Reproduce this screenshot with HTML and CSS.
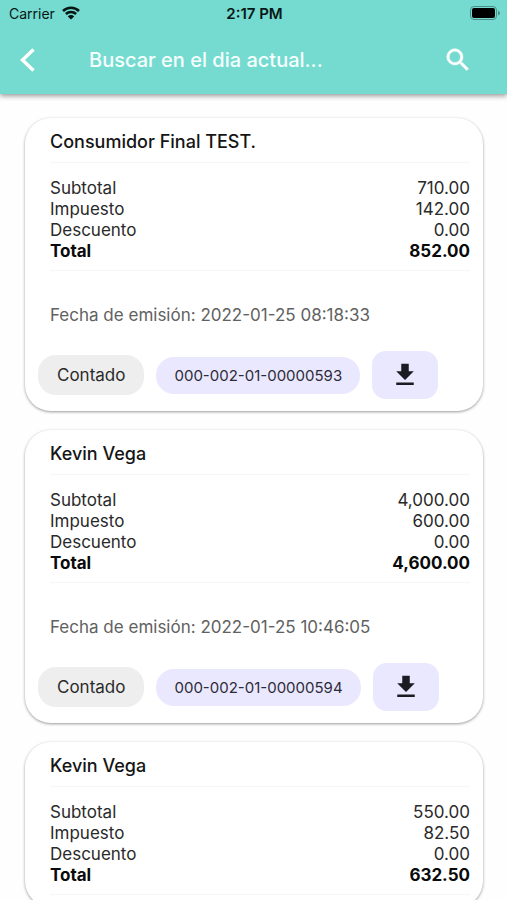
FILE: index.html
```html
<!DOCTYPE html>
<html lang="es">
<head>
<meta charset="utf-8">
<meta name="viewport" content="width=device-width, initial-scale=1">
<title>Facturas</title>
<link rel="stylesheet" href="styles.css">
</head>
<body>
<div class="app">
  <header class="header">
    <div class="status">
      <div class="carrier">
        <span>Carrier</span>
        <svg width="18" height="14" viewBox="0 0 18 14" aria-hidden="true">
          <path d="M1 5a11.300 11.300 0 0 1 16 0M3.900 8a7.200 7.200 0 0 1 10.200 0" fill="none" stroke="#071715" stroke-width="2.500"/>
          <path d="M9 13.500L5.800 10.400a4.500 4.500 0 0 1 6.400 0z" fill="#071715"/>
        </svg>
      </div>
      <div class="time">2:17 PM</div>
      <svg class="battery" width="30" height="14" viewBox="0 0 30 14" aria-hidden="true">
        <rect x=".5" y=".5" width="26" height="13" rx="3.500" fill="none" stroke="#4b8f87"/>
        <rect x="2" y="2" width="23" height="10" rx="2" fill="#000"/>
        <path d="M28 4.500q2 1 2 2.500t-2 2.500z" fill="#4b8f87"/>
      </svg>
    </div>
    <div class="bar">
      <button class="icon-button" type="button" aria-label="Volver">
        <svg width="16" height="24" viewBox="0 0 16 24" aria-hidden="true"><path d="M13.500 1.500L2.500 12l11 10.500" fill="none" stroke="#fff" stroke-width="3.400"/></svg>
      </button>
      <input class="search" type="text" placeholder="Buscar en el dia actual..." aria-label="Buscar">
      <button class="icon-button" type="button" aria-label="Buscar">
        <svg width="30" height="30" viewBox="0 0 24 24" aria-hidden="true"><path fill="#fff" stroke="#fff" stroke-width=".4" d="M15.500 14h-.79l-.28-.27A6.471 6.471 0 0 0 16 9.500 6.500 6.500 0 1 0 9.500 16c1.610 0 3.090-.59 4.230-1.570l.27.28v.79l5 4.990L20.490 19l-4.990-5zm-6 0C7.010 14 5 11.990 5 9.500S7.010 5 9.500 5 14 7.010 14 9.500 11.990 14 9.500 14z"/></svg>
      </button>
    </div>
  </header>
  <main class="list">
    <article class="card">
      <h2 class="name">Consumidor Final TEST.</h2>
      <table class="amounts">
        <tr><th scope="row">Subtotal</th><td>710.00</td></tr>
        <tr><th scope="row">Impuesto</th><td>142.00</td></tr>
        <tr><th scope="row">Descuento</th><td>0.00</td></tr>
        <tr class="total"><th scope="row">Total</th><td>852.00</td></tr>
      </table>
      <p class="date">Fecha de emisión: 2022-01-25 08:18:33</p>
      <div class="actions">
        <span class="chip">Contado</span>
        <span class="chip number">000-002-01-00000593</span>
        <button class="download" type="button" aria-label="Descargar"><svg width="30" height="30" viewBox="0 0 24 24" aria-hidden="true"><path fill="#1b1b22" d="M19 9h-4V3H9v6H5l7 7 7-7zM5 18v2h14v-2H5z"/></svg></button>
      </div>
    </article>
    <article class="card">
      <h2 class="name">Kevin Vega</h2>
      <table class="amounts">
        <tr><th scope="row">Subtotal</th><td>4,000.00</td></tr>
        <tr><th scope="row">Impuesto</th><td>600.00</td></tr>
        <tr><th scope="row">Descuento</th><td>0.00</td></tr>
        <tr class="total"><th scope="row">Total</th><td>4,600.00</td></tr>
      </table>
      <p class="date">Fecha de emisión: 2022-01-25 10:46:05</p>
      <div class="actions">
        <span class="chip">Contado</span>
        <span class="chip number">000-002-01-00000594</span>
        <button class="download" type="button" aria-label="Descargar"><svg width="30" height="30" viewBox="0 0 24 24" aria-hidden="true"><path fill="#1b1b22" d="M19 9h-4V3H9v6H5l7 7 7-7zM5 18v2h14v-2H5z"/></svg></button>
      </div>
    </article>
    <article class="card">
      <h2 class="name">Kevin Vega</h2>
      <table class="amounts">
        <tr><th scope="row">Subtotal</th><td>550.00</td></tr>
        <tr><th scope="row">Impuesto</th><td>82.50</td></tr>
        <tr><th scope="row">Descuento</th><td>0.00</td></tr>
        <tr class="total"><th scope="row">Total</th><td>632.50</td></tr>
      </table>
    </article>
  </main>
</div>
</body>
</html>
```
FILE: styles.css
```css
* { box-sizing: border-box; }

body {
  margin: 0;
  background: #fefefe;
  color: #2a2a2a;
  font-family: Inter, "Liberation Sans", sans-serif;
  font-size: 17px;
}

button {
  border: 0;
  padding: 0;
  display: grid;
  place-items: center;
  cursor: pointer;
}

svg { display: block; }

.app {
  height: 100vh;
  display: flex;
  flex-direction: column;
  overflow: hidden;
}

.header {
  background: #75dacf;
  box-shadow: 0 2px 5px rgba(0, 0, 0, .4);
  z-index: 1;
}

.status {
  display: grid;
  grid-template-columns: 1fr auto 1fr;
  align-items: center;
  height: 26px;
  padding: 0 7px 0 9px;
  font-size: 14px;
  color: #071715;
}

.carrier {
  display: flex;
  align-items: center;
  gap: 7px;
}

.time {
  font-size: 15px;
  font-weight: 600;
}

.battery { justify-self: end; }

.bar {
  display: flex;
  align-items: center;
  height: 68px;
  padding: 0 25px 0 4px;
}

.icon-button {
  width: 48px;
  height: 48px;
  background: none;
}

.search {
  flex: 1;
  min-width: 0;
  margin-left: 37px;
  padding: 0;
  border: 0;
  outline: 0;
  background: none;
  color: #fff;
  font: 500 20px/24px Inter, "Liberation Sans", sans-serif;
}

.search::placeholder {
  color: #f4fffe;
  opacity: 1;
}

.list {
  flex: 1;
  min-height: 0;
  overflow-y: auto;
  scrollbar-width: none;
  display: flex;
  flex-direction: column;
  gap: 19px;
  padding: 24px 24px 24px 25px;
}

.card {
  flex: none;
  padding: 0 13px 12px;
  border-radius: 26px;
  background: #fff;
  box-shadow: 0 1px 3px rgba(0, 0, 0, .4);
}

.name {
  margin: 0 0 0 12px;
  padding: 13px 0 9px;
  border-bottom: 1px solid #f6f6f6;
  color: #151515;
  font-size: 18px;
  font-weight: 500;
  line-height: 22px;
}

.amounts {
  display: block;
  margin-left: 12px;
  padding: 15px 0 8px;
  border-bottom: 1px solid #f6f6f6;
  border-spacing: 0;
  line-height: 21px;
}

.amounts tbody { display: block; }

.amounts tr {
  display: flex;
  justify-content: space-between;
}

.amounts th,
.amounts td {
  padding: 0;
  font-weight: 400;
}

.amounts .total th,
.amounts .total td {
  color: #0a0a0a;
  font-weight: 700;
}

.date {
  margin: 32px 0 24px 12px;
  color: #616161;
  line-height: 24px;
}

.actions {
  display: flex;
  align-items: center;
  gap: 12px;
}

.chip {
  padding: 8px 19px;
  border-radius: 18px;
  background: #eee;
  line-height: 24px;
}

.number {
  padding: 8px 18px;
  background: #eae8fe;
  color: #2d2b38;
  font-size: 15px;
  line-height: 21px;
}

.download {
  width: 66px;
  height: 48px;
  border-radius: 14px;
  background: #eae8fe;
}
```
